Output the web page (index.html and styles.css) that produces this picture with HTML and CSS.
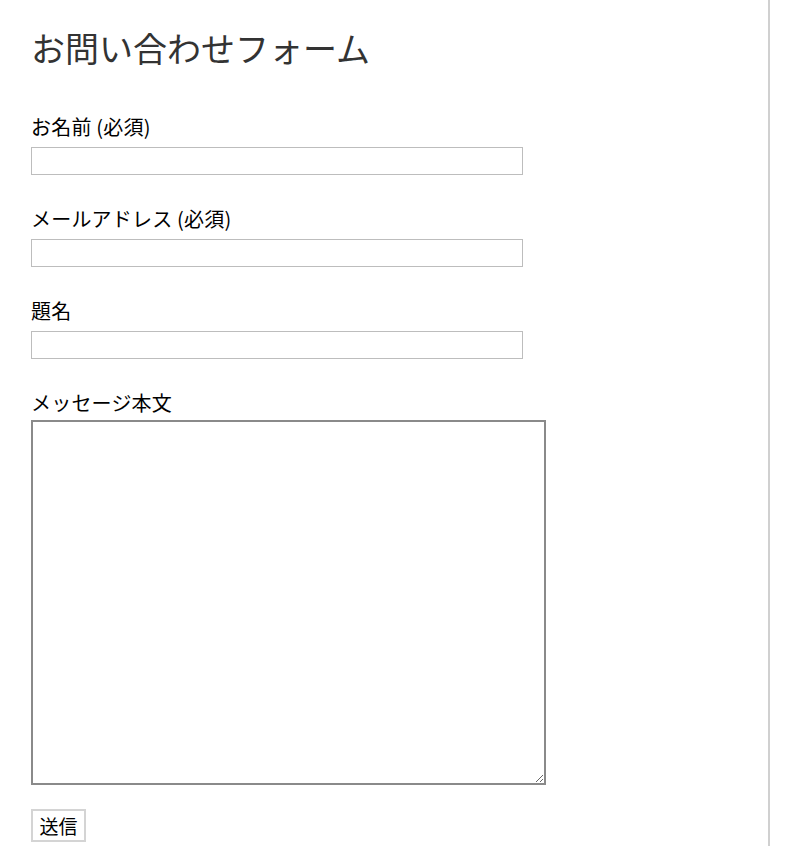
FILE: index.html
```html
<!DOCTYPE html>
<html lang="ja">
<head>
<meta charset="utf-8">
<title>お問い合わせフォーム</title>
<link rel="stylesheet" href="styles.css">
</head>
<body>
<div class="page">
  <h1 class="title">お問い合わせフォーム</h1>
  <form class="form">
    <div class="field">
      <label class="label" for="name">お名前 (必須)</label>
      <input class="input" id="name" type="text">
    </div>
    <div class="field">
      <label class="label" for="email">メールアドレス (必須)</label>
      <input class="input" id="email" type="email">
    </div>
    <div class="field">
      <label class="label" for="subject">題名</label>
      <input class="input" id="subject" type="text">
    </div>
    <div class="field field-msg">
      <label class="label" for="msg">メッセージ本文</label>
      <textarea class="textarea" id="msg"></textarea>
    </div>
    <button class="submit" type="button">送信</button>
  </form>
</div>
</body>
</html>
```
FILE: styles.css
```css
html, body {
  margin: 0;
  padding: 0;
  background: #fff;
}
body {
  font-family: "Noto Sans CJK JP", "Noto Sans", sans-serif;
  color: #000;
}
.page {
  width: 737px;
  min-height: 846px;
  padding-left: 31px;
  border-right: 2px solid #d0d0d0;
  box-sizing: content-box;
  overflow: hidden;
}
.title {
  margin: 28px 0 47px;
  font-size: 34px;
  line-height: 40px;
  font-weight: 400;
  color: #333;
}
.form {
  display: flex;
  flex-direction: column;
  align-items: flex-start;
}
.field {
  display: flex;
  flex-direction: column;
  align-items: flex-start;
  margin-bottom: 32px;
}
.label {
  display: block;
  font-size: 20px;
  line-height: 24px;
  margin-bottom: 8px;
  letter-spacing: 0.2px;
}
.input {
  width: 492px;
  height: 28px;
  box-sizing: border-box;
  border: 1px solid #bdbdbd;
  margin: 0;
  padding: 2px 4px;
  background: #fff;
  font: inherit;
}
.field-msg {
  margin-bottom: 24px;
}
.field-msg .label {
  margin-bottom: 5px;
}
.textarea {
  width: 515px;
  height: 365px;
  box-sizing: border-box;
  border: 2px solid #8a8a8a;
  margin: 0;
  padding: 2px;
  background: #fff;
  resize: both;
  font: inherit;
}
.submit {
  width: 55px;
  height: 33px;
  box-sizing: border-box;
  border: 2px solid #d4d4d4;
  background: #fff;
  margin: 0;
  padding: 0;
  font-family: inherit;
  font-size: 19px;
  line-height: 1;
  color: #000;
}
```
